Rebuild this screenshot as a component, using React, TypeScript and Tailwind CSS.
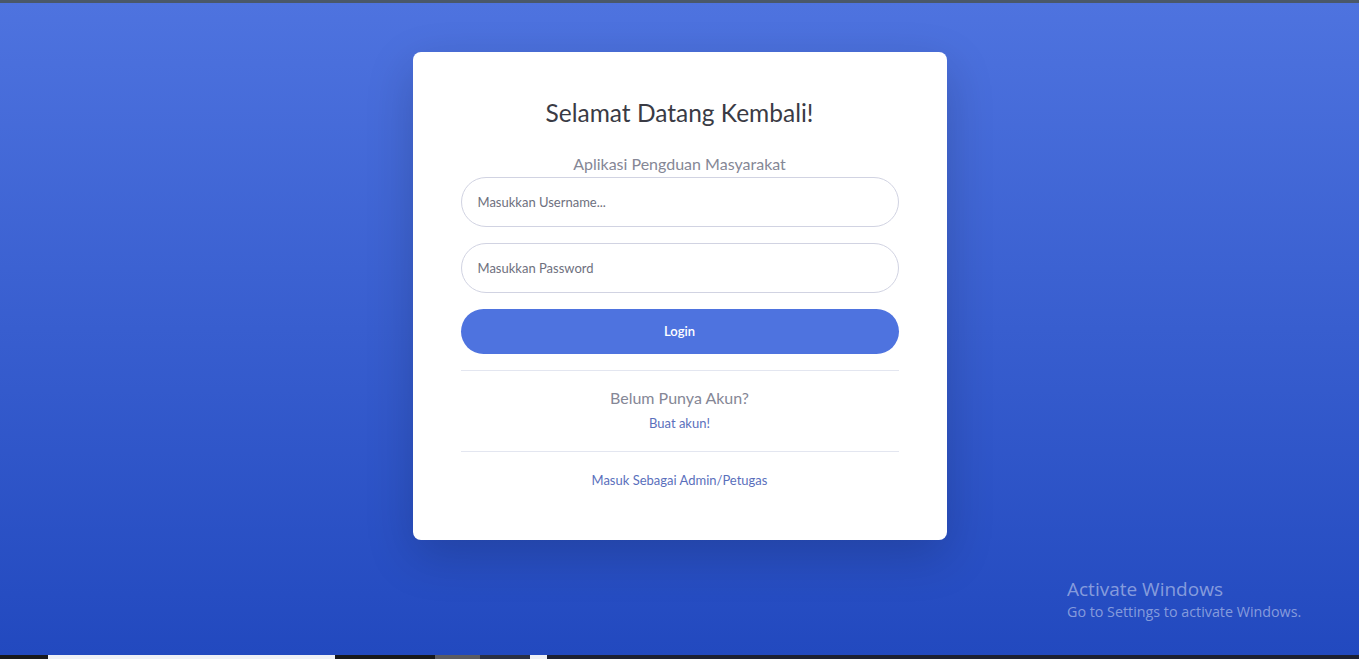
import React from 'react';

const font = "font-['Lato','Open_Sans',sans-serif]";

export default function App() {
  return (
    <div className={`relative flex h-[659px] w-full flex-col overflow-hidden ${font}`}>
      {/* top browser strip */}
      <div className="h-[3px] shrink-0 bg-[#4a5869]" />

      <main className="flex flex-1 justify-center bg-[linear-gradient(180deg,#4e73df_0%,#2249bf_100%)] pt-[49px]">
        <div className="h-[488px] w-[534px] rounded-lg bg-white px-12 pt-[46px] shadow-[0_1rem_3rem_rgba(0,0,0,0.175)]">
          <h1 className="mb-[25px] text-center text-[24.5px] leading-[29px] text-[#3a3b45]">Selamat Datang Kembali!</h1>
          <p className="mb-px text-center text-[16px] leading-6 text-[#858796]">Aplikasi Pengduan Masyarakat</p>

          <form className="flex flex-col gap-4" onSubmit={e => e.preventDefault()}>
            <input
              type="text"
              placeholder="Masukkan Username..."
              className="h-[50px] w-full rounded-full border border-[#d1d3e2] px-4 text-[13px] text-[#6e707e] placeholder:text-[#6e707e] outline-none"
            />
            <input
              type="password"
              placeholder="Masukkan Password"
              className="h-[50px] w-full rounded-full border border-[#d1d3e2] px-4 text-[13px] text-[#6e707e] placeholder:text-[#6e707e] outline-none"
            />
            <button type="submit" className="h-[45px] w-full rounded-full bg-[#4e73df] text-[13px] font-semibold text-white">
              Login
            </button>
          </form>

          <hr className="mt-4 border-[#e3e6f0]" />
          <div className="pt-[15px] pb-[17px] text-center">
            <p className="text-[16px] leading-6 text-[#858796]">Belum Punya Akun?</p>
            <a className="mt-[3px] inline-block text-[13px] leading-5 text-[#5a6fbc]">Buat akun!</a>
          </div>
          <hr className="border-[#e3e6f0]" />
          <div className="pt-[15px] text-center">
            <a className="text-[13px] leading-5 text-[#5a6fbc]">Masuk Sebagai Admin/Petugas</a>
          </div>
        </div>
      </main>

      {/* windows taskbar strip */}
      <div className="flex h-[4px] shrink-0 bg-[#1c2033]">
        <div className="w-[48px] bg-[#17181c]" />
        <div className="w-[287px] bg-[#eef0f6]" />
        <div className="w-[100px] bg-[#17181c]" />
        <div className="w-[45px] bg-[#5b5b62]" />
        <div className="w-[50px] bg-[#2a3045]" />
        <div className="w-[17px] bg-[#eef0f6]" />
        <div className="flex-1 bg-[#1c2033]" />
      </div>

      {/* activation watermark */}
      <div className="pointer-events-none absolute left-[1067px] top-[577px] font-['Open_Sans',sans-serif] text-white/45">
        <p className="text-[19px] leading-6">Activate Windows</p>
        <p className="text-[14.3px] leading-[22px]">Go to Settings to activate Windows.</p>
      </div>
    </div>
  );
}
